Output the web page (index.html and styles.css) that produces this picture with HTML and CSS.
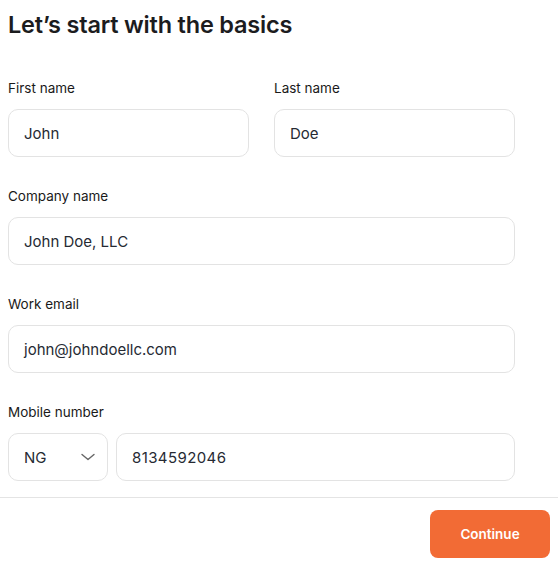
FILE: index.html
```html
<!DOCTYPE html>
<html lang="en">
<head>
<meta charset="utf-8">
<link rel="stylesheet" href="styles.css">
</head>
<body>
<div class="page">
  <form class="form">
    <h1 class="title">Let’s start with the basics</h1>
    <div class="row two">
      <div class="field">
        <label class="label">First name</label>
        <div class="input">John</div>
      </div>
      <div class="field">
        <label class="label">Last name</label>
        <div class="input">Doe</div>
      </div>
    </div>
    <div class="field">
      <label class="label">Company name</label>
      <div class="input">John Doe, LLC</div>
    </div>
    <div class="field">
      <label class="label">Work email</label>
      <div class="input">john@johndoellc.com</div>
    </div>
    <div class="field">
      <label class="label">Mobile number</label>
      <div class="phone">
        <div class="input select">
          <span>NG</span>
          <svg class="chev" width="14" height="8" viewBox="0 0 14 8"><path d="M1 1.5 L7 6.5 L13 1.5" fill="none" stroke="#666" stroke-width="1.4" stroke-linecap="round" stroke-linejoin="round"/></svg>
        </div>
        <div class="input grow num">8134592046</div>
      </div>
    </div>
  </form>
  <footer class="footer">
    <button class="btn" type="button">Continue</button>
  </footer>
</div>
</body>
</html>
```
FILE: styles.css
```css
* { box-sizing: border-box; }
html, body { margin: 0; padding: 0; background: #fff; }
body {
  font-family: Inter, "Noto Sans", sans-serif;
  color: #1d1d1f;
}
.page { width: 558px; }
.form {
  width: 507px;
  margin-left: 8px;
  display: flex;
  flex-direction: column;
  gap: 29px;
  padding-top: 10px;
}
.title {
  margin: 0 0 9px;
  font-size: 23.5px;
  line-height: 30px;
  font-weight: 600;
  letter-spacing: -0.2px;
  color: #1c1c1e;
}
.row.two {
  display: grid;
  grid-template-columns: 1fr 1fr;
  gap: 25px;
}
.field { display: flex; flex-direction: column; gap: 11px; }
.label {
  font-size: 13.5px;
  line-height: 20px;
  font-weight: 400;
  color: #1a1a1a;
}
.input {
  height: 48px;
  border: 1px solid #e3e3e3;
  border-radius: 10px;
  padding: 0 15px;
  display: flex;
  align-items: center;
  font-size: 15px;
  font-weight: 400;
  color: #262a33;
}
.num { letter-spacing: 0.4px; }
.phone { display: flex; gap: 8px; }
.select { width: 100px; justify-content: space-between; padding-right: 12px; }
.grow { flex: 1; }
.footer {
  margin-top: 16px;
  border-top: 1px solid #e4e4e4;
  display: flex;
  justify-content: flex-end;
  padding: 12px 8px 0 0;
}
.btn {
  width: 120px;
  height: 48px;
  border: 0;
  border-radius: 8px;
  background: #f26b35;
  color: #fff;
  font-family: Inter, sans-serif;
  font-size: 13.5px;
  font-weight: 600;
}
```
